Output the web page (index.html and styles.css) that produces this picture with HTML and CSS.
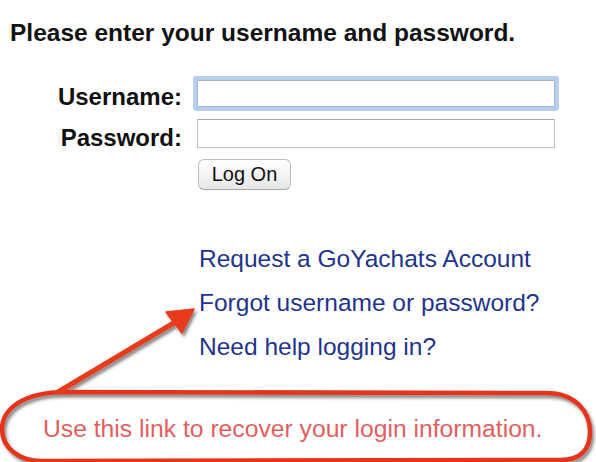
FILE: index.html
```html
<!DOCTYPE html>
<html lang="en">
<head>
<meta charset="utf-8">
<title>Log On</title>
<link rel="stylesheet" href="styles.css">
</head>
<body>
<main class="page">
  <h1 class="intro">Please enter your username and password.</h1>

  <form class="logon" action="#" onsubmit="return false;">
    <label class="field-label" for="user">Username:</label>
    <input class="field field-focus" id="user" type="text" autocomplete="off">
    <label class="field-label" for="pass">Password:</label>
    <input class="field" id="pass" type="password">
    <span></span>
    <div class="actions"><button class="btn" type="submit">Log On</button></div>
  </form>

  <ul class="links">
    <li><a href="#">Request a GoYachats Account</a></li>
    <li><a href="#">Forgot username or password?</a></li>
    <li><a href="#">Need help logging in?</a></li>
  </ul>

  <p class="callout-text">Use this link to recover your login information.</p>

  <!-- hand-drawn callout: arrow to the recovery link and the ring around the note -->
  <svg class="callout" width="596" height="462" viewBox="0 0 596 462" aria-hidden="true">
    <defs>
      <filter id="ink-shadow" x="-10%" y="-20%" width="120%" height="150%">
        <feDropShadow dx="2" dy="3" stdDeviation="1.6" flood-color="#2a2a2a" flood-opacity="0.55"/>
      </filter>
    </defs>
    <g filter="url(#ink-shadow)">
      <path class="ring" d="M 66 392 L 546 393 C 576 393 590 412 590 432 C 590 450 580 460 560 460 L 42 461 C 18 461 2 447 2 429 C 2 410 22 392 66 392 Z"/>
      <line class="shaft" x1="58" y1="392" x2="177" y2="321"/>
      <polygon class="head" points="194,309 166,312 182,333"/>
    </g>
  </svg>
</main>
</body>
</html>
```

FILE: styles.css
```css
html, body {
  margin: 0;
  padding: 0;
  background: #ffffff;
}

body {
  font-family: "Liberation Sans", Arial, Helvetica, sans-serif;
  color: #111;
  overflow: hidden;
}

.page {
  position: relative;
  width: 596px;
  height: 462px;
}

.intro {
  margin: 0;
  padding: 19px 0 0 10px;
  font-size: 24.5px;
  line-height: 28px;
  font-weight: bold;
  color: #121212;
}

.logon {
  display: grid;
  grid-template-columns: 182px 358px;
  grid-auto-rows: auto;
  column-gap: 15px;
  margin-top: 33px;
}

.field-label {
  justify-self: end;
  align-self: end;
  font-size: 24px;
  line-height: 20px;
  font-weight: bold;
  color: #111;
}

.field {
  box-sizing: border-box;
  width: 358px;
  height: 27px;
  margin: 0;
  padding: 2px 4px;
  border: 1px solid #bfbfbf;
  border-top-color: #a9a9a9;
  border-radius: 1px;
  background: #fff;
  font: 16px "Liberation Sans", Arial, sans-serif;
  outline: none;
}

.field-focus {
  border-color: #a8b4c4;
  box-shadow: 0 0 0 4px #b7cfee;
}

#pass {
  height: 29px;
  margin-top: 12px;
}

.actions {
  margin-top: 11px;
  padding-left: 1px;
}

.btn {
  box-sizing: border-box;
  width: 93px;
  height: 31px;
  margin: 0;
  padding: 0;
  border: 1px solid #bdbdbd;
  border-bottom-color: #a8a8a8;
  border-radius: 6px;
  background: linear-gradient(#ffffff, #f1f1f1 60%, #e6e6e6);
  font: 20px "Liberation Sans", Arial, sans-serif;
  color: #111;
}

.links {
  list-style: none;
  margin: 47px 0 0 0;
  padding: 0 0 0 199px;
}

.links li {
  font-size: 24.5px;
  line-height: 44px;
}

.links a {
  color: #1f348a;
  text-decoration: none;
}

.callout-text {
  margin: 46px 0 0 0;
  padding-left: 43px;
  font-size: 24.7px;
  line-height: 28px;
  color: #e06060;
}

.callout {
  position: absolute;
  top: 0;
  left: 0;
  pointer-events: none;
}

.callout .ring {
  fill: none;
  stroke: #e4361d;
  stroke-width: 4.5;
  stroke-linejoin: round;
}

.callout .shaft {
  stroke: #e73b1f;
  stroke-width: 5;
  stroke-linecap: round;
}

.callout .head {
  fill: #e73b1f;
  stroke: #e73b1f;
  stroke-width: 1.5;
  stroke-linejoin: round;
}
```
